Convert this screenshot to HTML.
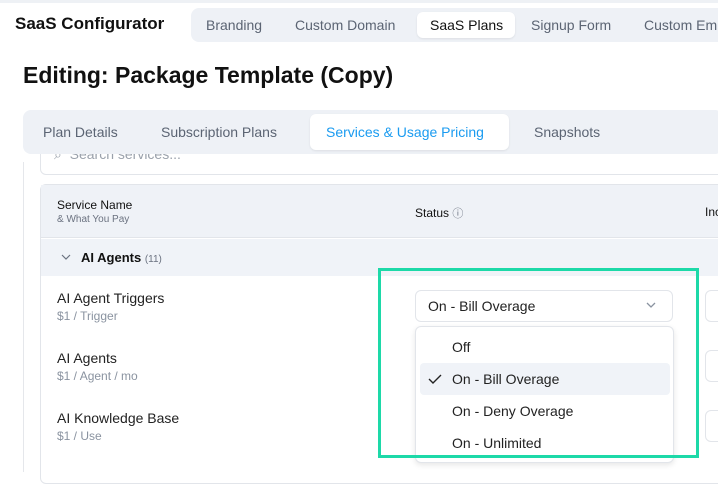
<!DOCTYPE html>
<html><head><style>
*{box-sizing:border-box;margin:0;padding:0}
body{width:718px;height:469px;overflow:hidden;background:#fff;font-family:"Liberation Sans",sans-serif;position:relative;color:#1f2937}
.a{position:absolute;white-space:nowrap}
</style></head><body>
<div class="a" style="left:0;top:0;width:718px;height:3px;background:#eef1f5"></div>
<div class="a" style="left:15px;top:14px;font-size:17px;font-weight:700;color:#111">SaaS Configurator</div>
<div class="a" style="left:191px;top:8px;width:540px;height:34px;background:#eef1f6;border-radius:8px"></div>
<div class="a" style="left:417px;top:12px;width:98px;height:26px;background:#fff;border-radius:6px;box-shadow:0 1px 2px rgba(0,0,0,.08)"></div>
<div class="a" style="left:206px;top:17px;font-size:14px;color:#5b6473">Branding</div>
<div class="a" style="left:295px;top:17px;font-size:14px;color:#5b6473">Custom Domain</div>
<div class="a" style="left:430px;top:17px;font-size:14px;color:#111">SaaS Plans</div>
<div class="a" style="left:531px;top:17px;font-size:14px;color:#5b6473">Signup Form</div>
<div class="a" style="left:644px;top:17px;font-size:14px;color:#5b6473">Custom Em</div>
<div class="a" style="left:23px;top:62px;font-size:23px;font-weight:700;color:#111">Editing: Package Template (Copy)</div>

<div class="a" style="left:23px;top:162px;width:1px;height:310px;background:#e5e7eb"></div>
<div class="a" style="left:40px;top:140px;width:690px;height:35px;border:1px solid #e2e5ea;border-radius:6px;background:#fff"></div>
<div class="a" style="left:54px;top:146px;font-size:14px;color:#9aa1ab">⌕ &nbsp;Search services...</div>

<div class="a" style="left:23px;top:110px;width:700px;height:44px;background:#eef1f6;border-radius:8px"></div>
<div class="a" style="left:310px;top:114px;width:199px;height:36px;background:#fff;border-radius:6px;box-shadow:0 1px 2px rgba(0,0,0,.08)"></div>
<div class="a" style="left:43px;top:124px;font-size:14px;color:#5b6473">Plan Details</div>
<div class="a" style="left:161px;top:124px;font-size:14px;color:#5b6473">Subscription Plans</div>
<div class="a" style="left:326px;top:124px;font-size:14px;color:#1a9bf0">Services &amp; Usage Pricing</div>
<div class="a" style="left:534px;top:124px;font-size:14px;color:#5b6473">Snapshots</div>

<div class="a" style="left:40px;top:184px;width:690px;height:300px;border:1px solid #e2e5ea;border-radius:6px;background:#fff"></div>
<div class="a" style="left:41px;top:185px;width:688px;height:53px;background:#eff2f7;border-bottom:1px solid #e2e5ea"></div>
<div class="a" style="left:57px;top:198px;font-size:12px;color:#111">Service Name</div>
<div class="a" style="left:57px;top:214px;font-size:10px;color:#6b7280">&amp; What You Pay</div>
<div class="a" style="left:415px;top:205px;font-size:12px;color:#111">Status <span style="color:#6b7280;font-size:11px">ⓘ</span></div>
<div class="a" style="left:705px;top:205px;font-size:12px;color:#111">Inc</div>
<div class="a" style="left:41px;top:239px;width:688px;height:37px;background:#f0f3f8"></div>
<svg class="a" style="left:61px;top:254px" width="10" height="7"><path d="M1 1l4 4 4-4" fill="none" stroke="#6b7280" stroke-width="1.2"/></svg>
<div class="a" style="left:81px;top:250px;font-size:13px;font-weight:700;color:#111">AI Agents <span style="font-weight:400;font-size:10px;color:#6b7280">(11)</span></div>

<div class="a" style="left:57px;top:290px;font-size:14px;color:#222">AI Agent Triggers</div>
<div class="a" style="left:57px;top:309px;font-size:12px;color:#8a93a0">$1 / Trigger</div>
<div class="a" style="left:57px;top:350px;font-size:14px;color:#222">AI Agents</div>
<div class="a" style="left:57px;top:369px;font-size:12px;color:#8a93a0">$1 / Agent / mo</div>
<div class="a" style="left:57px;top:410px;font-size:14px;color:#222">AI Knowledge Base</div>
<div class="a" style="left:57px;top:429px;font-size:12px;color:#8a93a0">$1 / Use</div>

<div class="a" style="left:705px;top:290px;width:30px;height:32px;border:1px solid #e2e5ea;border-radius:6px"></div>
<div class="a" style="left:705px;top:350px;width:30px;height:32px;border:1px solid #e2e5ea;border-radius:6px"></div>
<div class="a" style="left:705px;top:410px;width:30px;height:32px;border:1px solid #e2e5ea;border-radius:6px"></div>

<div class="a" style="left:415px;top:290px;width:258px;height:32px;border:1px solid #e2e5ea;border-radius:6px;background:#fff"></div>
<div class="a" style="left:428px;top:298px;font-size:14px;color:#222">On - Bill Overage</div>
<svg class="a" style="left:646px;top:301px" width="10" height="8"><path d="M1 2l4 4 4-4" fill="none" stroke="#8a93a0" stroke-width="1.3"/></svg>

<div class="a" style="left:415px;top:326px;width:259px;height:137px;border:1px solid #e2e5ea;border-radius:6px;background:#fff;box-shadow:0 2px 6px rgba(0,0,0,.1)"></div>
<div class="a" style="left:420px;top:363px;width:250px;height:32px;background:#f0f3f8;border-radius:4px"></div>
<div class="a" style="left:452px;top:339px;font-size:14px;color:#222">Off</div>
<svg class="a" style="left:428px;top:373px" width="14" height="12"><path d="M1 6l4 4 8-8" fill="none" stroke="#222" stroke-width="1.4"/></svg>
<div class="a" style="left:452px;top:371px;font-size:14px;color:#222">On - Bill Overage</div>
<div class="a" style="left:452px;top:403px;font-size:14px;color:#222">On - Deny Overage</div>
<div class="a" style="left:452px;top:435px;font-size:14px;color:#222">On - Unlimited</div>

<div class="a" style="left:378px;top:268px;width:321px;height:190px;border:3px solid #1dd9a8"></div>
</body></html>
